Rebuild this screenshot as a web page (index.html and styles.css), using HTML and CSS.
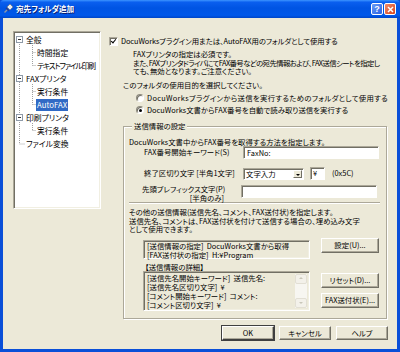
FILE: index.html
```html
<!DOCTYPE html>
<html lang="ja">
<head>
  <meta charset="UTF-8">
  <meta name="viewport" content="width=device-width, initial-scale=1.0">
  <title>宛先フォルダ追加</title>
  <link rel="stylesheet" href="styles.css">
</head>
<body>

  <div class="janela">
    <!-- Barra de título estilo XP -->
    <div class="titulo">
      <svg class="titulo-icone" width="10" height="10" viewBox="0 0 10 10">
        <path d="M1 8 L4 5 L5 6 L2 9 Z" fill="#8c96a8"/>
        <path d="M4 3 L7 0 L10 3 L7 6 Z" fill="#e8ecf2" stroke="#6b7890" stroke-width="0.8"/>
        <path d="M3 4 L6 7" stroke="#2b3f8c" stroke-width="1.4"/>
      </svg>
      <span class="titulo-texto">宛先フォルダ追加</span>
      <div class="titulo-botoes">
        <span class="botao-ajuda">?</span>
        <span class="botao-fechar">
          <svg width="7" height="7" viewBox="0 0 7 7"><path d="M1 1 L6 6 M6 1 L1 6" stroke="#fff" stroke-width="1.5"/></svg>
        </span>
      </div>
    </div>

    <div class="cliente">
      <div class="principal">
        <!-- Árvore de categorias -->
        <div class="arvore">
          <svg class="arvore-linhas" width="84" height="174" viewBox="0 0 84 174">
            <g stroke="#a0a0a0" stroke-width="1" stroke-dasharray="1 1" fill="none">
              <path d="M4.5 9 V111 M4.5 111 H10"/>
              <path d="M17.5 12 V32.5 M17.5 19.5 H21 M17.5 32.5 H21"/>
              <path d="M17.5 51 V71.5 M17.5 58.5 H21 M17.5 71.5 H21"/>
              <path d="M17.5 90 V97.5 M17.5 97.5 H21"/>
            </g>
          </svg>
          <div class="no"><span class="caixa"></span><span class="rotulo">全般</span></div>
          <div class="no filho"><span class="rotulo">時間指定</span></div>
          <div class="no filho"><span class="rotulo estreito">テキストファイル印刷</span></div>
          <div class="no"><span class="caixa"></span><span class="rotulo">FAXプリンタ</span></div>
          <div class="no filho"><span class="rotulo">実行条件</span></div>
          <div class="no filho"><span class="rotulo selecionado">AutoFAX</span></div>
          <div class="no"><span class="caixa"></span><span class="rotulo">印刷プリンタ</span></div>
          <div class="no filho"><span class="rotulo">実行条件</span></div>
          <div class="no"><span class="rotulo">ファイル変換</span></div>
        </div>

        <!-- Painel de configuração -->
        <div class="painel">
          <div class="linha-check">
            <span class="check marcado"></span>
            <span>DocuWorksプラグイン用または、AutoFAX用のフォルダとして使用する</span>
          </div>
          <p class="aviso">FAXプリンタの指定は必須です。<br><span class="aviso-longo">また、FAXプリンタドライバにてFAX番号などの宛先情報および、FAX送信シートを指定し</span><br>ても、無効となります。ご注意ください。</p>
          <p class="pergunta">このフォルダの使用目的を選択してください。</p>
          <div class="radios">
            <div class="linha-radio"><span class="radio"></span><span class="largo-texto">DocuWorksプラグインから送信を実行するためのフォルダとして使用する</span></div>
            <div class="linha-radio"><span class="radio marcado"></span><span>DocuWorks文書からFAX番号を自動で読み取り送信を実行する</span></div>
          </div>

          <fieldset class="grupo">
            <legend>送信情報の設定</legend>
            <p class="grupo-intro">DocuWorks文書中からFAX番号を取得する方法を指定します。</p>

            <div class="form">
              <div class="form-linha">
                <label class="form-rotulo">FAX番号開始キーワード(S)</label>
                <div class="campo largo">FaxNo:</div>
              </div>

              <div class="form-linha">
                <label class="form-rotulo">終了区切り文字 [半角1文字]</label>
                <div class="combo"><span class="combo-texto">文字入力</span><span class="combo-seta"></span></div>
                <div class="campo curto">¥</div>
                <span class="codigo">(0x5C)</span>
              </div>

              <div class="form-linha alto">
                <label class="form-rotulo duplo">先頭プレフィックス文字(P)<br>[半角のみ]</label>
                <div class="campo largo"></div>
              </div>
            </div>

            <div class="separador"></div>

            <p class="grupo-texto">その他の送信情報(送信先名、コメント、FAX送付状)を指定します。<br>送信先名、コメントは、FAX送付状を付けて送信する場合の、埋め込み文字<br>として使用できます。</p>

            <div class="detalhe">
              <div class="detalhe-esq">
                <div class="caixa-info">[送信情報の指定]&nbsp; DocuWorks文書から取得<br>[FAX送付状の指定]&nbsp; H:¥Program</div>
                <p class="detalhe-titulo">【送信情報の詳細】</p>
                <div class="lista">
                  <div class="lista-texto">[送信先名開始キーワード]&nbsp; 送信先名:<br>[送信先名区切り文字]&nbsp; ¥<br>[コメント開始キーワード]&nbsp; コメント:<br>[コメント区切り文字]&nbsp; ¥</div>
                  <div class="rolagem">
                    <span class="rolagem-botao"><span class="seta-cima"></span></span>
                    <span class="rolagem-trilho"></span>
                    <span class="rolagem-botao"><span class="seta-baixo"></span></span>
                  </div>
                </div>
              </div>
              <div class="detalhe-dir">
                <button class="botao b-definir">設定(U)...</button>
                <button class="botao b-reset">リセット(D)...</button>
                <button class="botao b-fax">FAX送付状(E)...</button>
              </div>
            </div>
          </fieldset>
        </div>
      </div>

      <div class="rodape">
        <button class="botao rodape-botao padrao">OK</button>
        <button class="botao rodape-botao">キャンセル</button>
        <button class="botao rodape-botao">ヘルプ</button>
      </div>
    </div>
  </div>

</body>
</html>
```

FILE: styles.css
```css
/* Reset básico */
* {
  margin: 0;
  padding: 0;
  box-sizing: border-box;
}

body {
  width: 400px;
  height: 352px;
  overflow: hidden;
  font-family: "Noto Sans CJK JP", "Noto Sans", sans-serif;
  font-size: 7.4px;
  line-height: 8.5px;
  font-feature-settings: "palt";
  color: #000;
  background-color: #0a4fd8;
}

button {
  font: inherit;
  color: inherit;
  font-feature-settings: "palt";
}

.janela {
  width: 400px;
  height: 352px;
  display: flex;
  flex-direction: column;
}

/* Barra de título */
.titulo {
  height: 18px;
  display: flex;
  align-items: center;
  padding: 0 4px 0 3px;
  background: linear-gradient(to bottom, #3d95ff 0%, #0a5fef 12%, #0054e3 45%, #0058ea 85%, #0046c8 100%);
  border-radius: 4px 4px 0 0;
}

.titulo-icone {
  margin-right: 3px;
}

.titulo-texto {
  color: #fff;
  font-weight: bold;
  font-size: 7.6px;
  text-shadow: 1px 1px 0 #0a1e70;
  flex: 1;
}

.titulo-botoes {
  display: flex;
  gap: 1px;
}

.botao-ajuda,
.botao-fechar {
  width: 12px;
  height: 12px;
  border: 1px solid #fff;
  border-radius: 2px;
  display: flex;
  align-items: center;
  justify-content: center;
  color: #fff;
  font-weight: bold;
  font-size: 9px;
  font-family: "Liberation Sans", sans-serif;
}

.botao-ajuda {
  background: linear-gradient(135deg, #6a9cf6, #2a62e4);
}

.botao-fechar {
  background: linear-gradient(135deg, #f08c6c, #d8431b);
}

/* Área cliente */
.cliente {
  flex: 1;
  display: flex;
  flex-direction: column;
  background-color: #ece9d8;
  margin: 0 3px 3px 3px;
}

.principal {
  display: flex;
}

/* Árvore */
.arvore {
  position: relative;
  width: 88px;
  height: 178px;
  margin: 13px 0 0 10px;
  background: #fff;
  border: 1px solid;
  border-color: #aca899 #fff #fff #aca899;
  box-shadow: inset 1px 1px 0 #716f64, inset -1px -1px 0 #f1efe2;
  padding: 1px 0 0 1px;
  font-size: 7.8px;
}

.arvore-linhas {
  position: absolute;
  left: 1px;
  top: 1px;
}

.no {
  position: relative;
  height: 13px;
  display: flex;
  align-items: center;
  padding-left: 10px;
}

.no.filho {
  padding-left: 21px;
}

.caixa {
  position: absolute;
  left: 1px;
  top: 3px;
  width: 7px;
  height: 7px;
  border: 1px solid #8e9aa8;
  background: #fff;
}

.caixa::after {
  content: "";
  position: absolute;
  left: 1px;
  top: 2px;
  width: 3px;
  height: 1px;
  background: #333;
}

.rotulo {
  padding: 2px 1px;
  white-space: nowrap;
  line-height: 8px;
}

.rotulo.estreito {
  letter-spacing: -1.2px;
}

.selecionado {
  background: #316ac5;
  color: #fff;
}

/* Painel */
.painel {
  margin-left: 8px;
  width: 279px;
  display: flex;
  flex-direction: column;
}

.linha-check {
  display: flex;
  align-items: center;
  gap: 3px;
  margin-top: 18px;
  height: 10px;
  letter-spacing: -0.1px;
  white-space: nowrap;
}

.check {
  position: relative;
  width: 9px;
  height: 9px;
  background: #fff;
  border: 1px solid;
  border-color: #aca899 #fff #fff #aca899;
  box-shadow: inset 1px 1px 0 #716f64;
}

.check.marcado::after {
  content: "";
  position: absolute;
  left: 2px;
  top: 0px;
  width: 2px;
  height: 4px;
  border: solid #000;
  border-width: 0 1.5px 1.5px 0;
  transform: rotate(40deg);
}

.aviso {
  margin: 4px 0 0 24px;
  white-space: nowrap;
}

.aviso-longo {
  letter-spacing: -0.6px;
}

.pergunta {
  margin: 5px 0 0 14px;
}

.radios {
  margin: 3px 0 0 27px;
}

.linha-radio {
  display: flex;
  align-items: center;
  gap: 3px;
  height: 12px;
  white-space: nowrap;
}

.largo-texto {
  letter-spacing: 0.3px;
}

.radio {
  position: relative;
  flex: none;
  width: 8px;
  height: 8px;
  border-radius: 50%;
  background: #fff;
  border: 1px solid;
  border-color: #8d8a7e #fff #fff #8d8a7e;
  box-shadow: inset 1px 1px 0 #716f64;
}

.radio.marcado::after {
  content: "";
  position: absolute;
  left: 1.5px;
  top: 1.5px;
  width: 3px;
  height: 3px;
  border-radius: 50%;
  background: #000;
}

/* Grupo "送信情報の設定" */
.grupo {
  margin: 6px 0 0 14px;
  width: 264px;
  height: 197px;
  border: 1px solid #aca899;
  box-shadow: 1px 1px 0 #fff, inset 1px 1px 0 #fff;
  padding: 0 6px 0 5px;
}

.grupo legend {
  margin-left: 3px;
  padding: 0 2px;
  background: #ece9d8;
}

.grupo-intro {
  margin-top: 7px;
}

.form {
  display: flex;
  flex-direction: column;
  margin: 0 0 0 15px;
}

.form-linha {
  display: flex;
  align-items: center;
  height: 13px;
  margin-top: 8px;
}

.form-linha:first-child {
  margin-top: 0;
}

.form-linha.alto {
  align-items: flex-start;
  height: 17px;
  margin-top: 5px;
}

.form-rotulo {
  width: 99px;
  white-space: nowrap;
}

.form-rotulo.duplo {
  width: 82px;
  margin: 0 17px 0 -2px;
  text-align: right;
}

.campo {
  height: 13px;
  background: #fff;
  border: 1px solid;
  border-color: #aca899 #fff #fff #aca899;
  box-shadow: inset 1px 1px 0 #716f64;
  padding: 2px 3px;
  line-height: 8px;
}

.campo.largo {
  width: 136px;
}

.campo.curto {
  width: 15px;
  margin-left: 6px;
  padding: 1px 2px;
}

.codigo {
  margin-left: 7px;
}

.combo {
  width: 61px;
  height: 12px;
  display: flex;
  background: #fff;
  border: 1px solid;
  border-color: #aca899 #fff #fff #aca899;
  box-shadow: inset 1px 1px 0 #716f64;
  padding: 1px 1px 1px 2px;
}

.combo-texto {
  flex: 1;
  line-height: 8px;
}

.combo-seta {
  position: relative;
  width: 9px;
  background: #ece9d8;
  border: 1px solid;
  border-color: #fff #716f64 #716f64 #fff;
}

.combo-seta::after {
  content: "";
  position: absolute;
  left: 1.5px;
  top: 3px;
  border: 2px solid transparent;
  border-top: 2px solid #000;
}

.separador {
  margin-top: 0;
  border-top: 1px solid #aca899;
  border-bottom: 1px solid #fff;
}

.grupo-texto {
  margin-top: 4px;
  white-space: nowrap;
}

/* Detalhes do envio */
.detalhe {
  display: flex;
  gap: 11px;
  margin: 4px 0 0 14px;
}

.detalhe-esq {
  width: 167px;
  display: flex;
  flex-direction: column;
}

.caixa-info,
.lista {
  border: 1px solid;
  border-color: #aca899 #fff #fff #aca899;
  box-shadow: inset 1px 1px 0 #716f64, inset -1px -1px 0 #f1efe2;
  background: #ece9d8;
}

.caixa-info {
  margin-top: 2px;
  height: 19px;
  padding: 0 3px;
  white-space: nowrap;
  line-height: 9px;
}

.detalhe-titulo {
  margin-top: 4px;
  padding-left: 2px;
}

.lista {
  height: 40px;
  display: flex;
}

.lista-texto {
  flex: 1;
  padding: 1px 3px 0;
  white-space: nowrap;
  line-height: 9px;
}

.rolagem {
  width: 12px;
  margin: 2px 2px 2px 0;
  display: flex;
  flex-direction: column;
  background: #f7f6f1;
}

.rolagem-botao {
  position: relative;
  height: 10px;
  background: #f3f1ea;
  border: 1px solid #e2dfd4;
  border-radius: 2px;
}

.rolagem-trilho {
  flex: 1;
}

.seta-cima,
.seta-baixo {
  position: absolute;
  left: 2.5px;
  border: 2.5px solid transparent;
}

.seta-cima {
  top: 0px;
  border-bottom-color: #c9c7ba;
}

.seta-baixo {
  top: 3px;
  border-top-color: #c9c7ba;
}

.detalhe-dir {
  display: flex;
  flex-direction: column;
}

/* Botões clássicos */
.botao {
  height: 15px;
  background: #ece9d8;
  border: 1px solid;
  border-color: #fff #716f64 #716f64 #fff;
  box-shadow: inset -1px -1px 0 #aca899;
  cursor: pointer;
  line-height: 8px;
}

.detalhe-dir .botao {
  width: 58px;
}

.b-reset {
  margin-top: 20px;
}

.b-fax {
  margin-top: 5px;
}

/* Rodapé */
.rodape {
  display: flex;
  justify-content: flex-end;
  gap: 5px;
  margin-top: auto;
  padding: 0 9px 9px 0;
}

.rodape-botao {
  width: 52px;
  height: 14px;
}

.rodape-botao.padrao {
  border-color: #fff #404040 #404040 #fff;
  outline: 1px solid #404040;
}
```
